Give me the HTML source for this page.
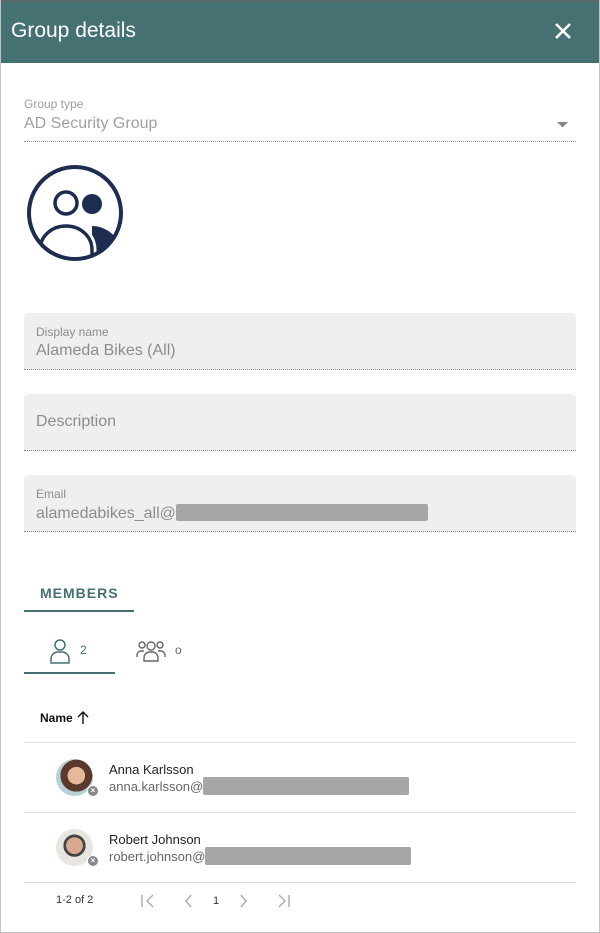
<!DOCTYPE html>
<html><head><meta charset="utf-8"><style>
*{margin:0;padding:0;box-sizing:border-box}
body{width:600px;height:933px;position:relative;background:#fff;font-family:"Liberation Sans",sans-serif;overflow:hidden}
.frame{position:absolute;left:0;top:0;width:600px;height:933px;border:1px solid #c4c4c4;border-top:none}
.hdr{position:absolute;left:0;top:0;width:600px;height:63px;background:#467173;border-top:2px solid #5a6a6a}
.hdr .t{position:absolute;left:11px;top:17px;font-size:21px;color:#fff}
.abs{position:absolute}
.field{position:absolute;left:24px;width:552px;height:57px;background:#efefef;border-radius:4px 4px 0 0;border-bottom:1px dotted #8a8a8a}
.lbl{position:absolute;left:12px;font-size:12px;color:#8c8c8c}
.val{position:absolute;left:12px;font-size:16px;color:#8c8c8c}
.red{display:inline-block;background:#a6a6a6;border-radius:2px;vertical-align:middle}
.row{position:absolute;left:24px;width:552px;border-top:1px solid #e0e0e0}
.nm{position:absolute;left:109px;font-size:13px;color:#222}
.em{position:absolute;left:109px;font-size:13px;color:#666}
.av{position:absolute;left:56px;width:37px;height:37px;border-radius:50%}
.x{position:absolute;width:12px;height:12px;border-radius:50%;background:#888;border:1px solid #fff;color:#fff;font-size:8px;line-height:10px;text-align:center;font-weight:bold}
</style></head><body>
<div class="hdr"><div class="t">Group details</div>
<svg class="abs" style="left:554px;top:20px" width="18" height="18"><path d="M2 2L16 16M16 2L2 16" stroke="#fff" stroke-width="2.6"/></svg></div>
<div class="frame"></div>

<div class="abs" style="left:24px;top:97px;font-size:12px;color:#a0a0a0">Group type</div>
<div class="abs" style="left:24px;top:115px;font-size:16px;color:#a0a0a0">AD Security Group</div>
<svg class="abs" style="left:557px;top:122px" width="12" height="6"><path d="M0 0H11L5.5 5.5Z" fill="#888"/></svg>
<div class="abs" style="left:24px;top:141px;width:552px;border-top:1px dotted #999"></div>

<svg class="abs" style="left:20px;top:160px" width="110" height="110" viewBox="0 0 110 110">
<defs><clipPath id="c"><circle cx="55" cy="53" r="45"/></clipPath></defs>
<g clip-path="url(#c)" fill="none" stroke="#1d2c4f">
<circle cx="72" cy="44" r="10" fill="#1d2c4f" stroke="none"/>
<path d="M72 66c14 0 26 10 30 24v25H72z" fill="#1d2c4f" stroke="none"/>
<circle cx="46" cy="43" r="11" stroke-width="8" stroke="#fff" fill="#fff"/>
<circle cx="46" cy="43" r="11" stroke-width="3.5"/>
<path d="M20 110V90c0-14 12-24 26-24s26 10 26 24v20" stroke-width="9" stroke="#fff" fill="#fff"/>
<path d="M20 110V90c0-14 12-24 26-24s26 10 26 24v20" stroke-width="3.5"/>
</g>
<circle cx="55" cy="53" r="46" fill="none" stroke="#1d2c4f" stroke-width="4"/>
</svg>

<div class="field" style="top:313px"><div class="lbl" style="top:12px">Display name</div><div class="val" style="top:29px">Alameda Bikes (All)</div></div>
<div class="field" style="top:394px"><div class="val" style="top:19px;font-size:16px">Description</div></div>
<div class="field" style="top:475px"><div class="lbl" style="top:12px">Email</div><div class="val" style="top:30px">alamedabikes_all@<span class="red" style="width:252px;height:17px;margin-top:-3px"></span></div></div>

<div class="abs" style="left:40px;top:585px;font-size:14px;font-weight:bold;letter-spacing:1px;color:#467173">MEMBERS</div>
<div class="abs" style="left:24px;top:610px;width:110px;height:2px;background:#467173"></div>

<svg class="abs" style="left:48px;top:638px" width="24" height="26" viewBox="0 0 24 26" fill="none" stroke="#467173" stroke-width="1.5"><circle cx="12" cy="7" r="5"/><path d="M3 25v-4c0-4 3-7 7-7h4c4 0 7 3 7 7v4z"/></svg>
<div class="abs" style="left:80px;top:643px;font-size:12px;color:#467173">2</div>
<div class="abs" style="left:24px;top:672px;width:91px;height:2px;background:#467173"></div>
<svg class="abs" style="left:136px;top:640px" width="30" height="22" viewBox="0 0 30 22" fill="none" stroke="#666" stroke-width="1.4"><circle cx="15" cy="6" r="4"/><circle cx="6" cy="5" r="3"/><circle cx="24" cy="5" r="3"/><path d="M8 21v-3c0-3 2-6 6-6h2c4 0 6 3 6 6v3z"/><path d="M8 11H5c-2 0-4 2-4 4v2M22 11h3c2 0 4 2 4 4v2"/></svg>
<div class="abs" style="left:175px;top:643px;font-size:12px;color:#666">o</div>

<div class="abs" style="left:40px;top:711px;font-size:12px;font-weight:bold;color:#111">Name</div>
<svg class="abs" style="left:77px;top:711px" width="12" height="13" viewBox="0 0 12 13" fill="none" stroke="#111" stroke-width="1.4"><path d="M6 13V1M1 6l5-5 5 5"/></svg>

<div class="row" style="top:742px"></div>
<div class="av" style="top:759px;background:radial-gradient(circle at 55% 45%,#e8b89a 0 30%,#5a3a2a 31% 55%,#b9d0d8 56%)"></div>
<div class="x" style="left:87px;top:785px">×</div>
<div class="nm" style="top:762px">Anna Karlsson</div>
<div class="em" style="top:779px">anna.karlsson@<span class="red" style="width:206px;height:18px;margin-top:-3px"></span></div>

<div class="row" style="top:812px"></div>
<div class="av" style="top:829px;background:radial-gradient(circle at 50% 45%,#d9a890 0 30%,#444 31% 40%,#e8e4e0 41%)"></div>
<div class="x" style="left:87px;top:855px">×</div>
<div class="nm" style="top:832px">Robert Johnson</div>
<div class="em" style="top:849px">robert.johnson@<span class="red" style="width:206px;height:18px;margin-top:-3px"></span></div>

<div class="row" style="top:882px"></div>
<div class="abs" style="left:56px;top:894px;font-size:11px;color:#333">1-2 of 2</div>
<svg class="abs" style="left:140px;top:893px" width="160" height="16" viewBox="0 0 160 16" fill="none" stroke="#aaa" stroke-width="1.4"><path d="M2 2v12M13 2L7 8l6 6M51 2l-5 6 5 6M101 2l5 6-5 6M139 2l6 6-6 6M149 2v12"/></svg>
<div class="abs" style="left:213px;top:895px;font-size:11px;color:#333">1</div>
</body></html>
